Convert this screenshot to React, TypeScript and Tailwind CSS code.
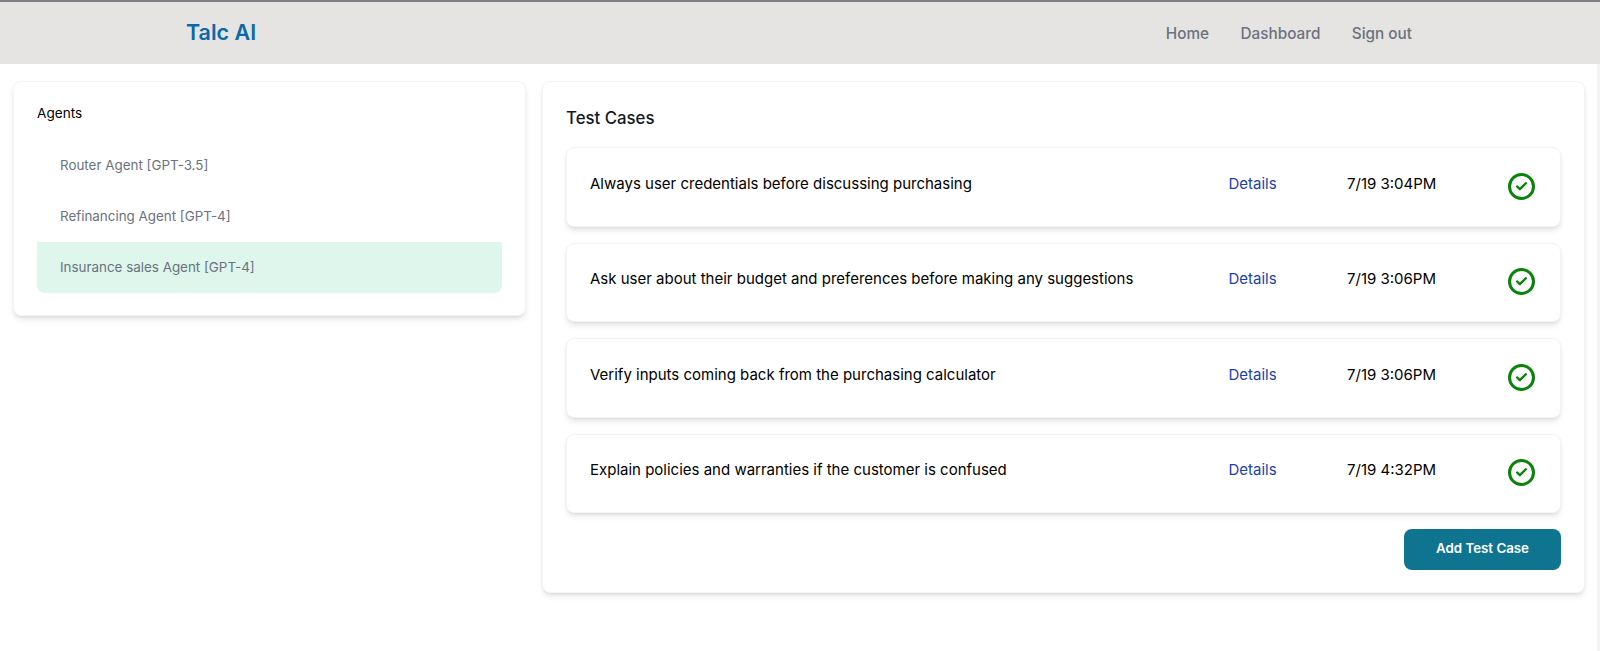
import { Check } from 'lucide-react';

const agents = [
    { name: 'Router Agent [GPT-3.5]', selected: false },
    { name: 'Refinancing Agent [GPT-4]', selected: false },
    { name: 'Insurance sales Agent [GPT-4]', selected: true },
];

const testCases = [
    { title: 'Always user credentials before discussing purchasing', time: '7/19 3:04PM' },
    { title: 'Ask user about their budget and preferences before making any suggestions', time: '7/19 3:06PM' },
    { title: 'Verify inputs coming back from the purchasing calculator', time: '7/19 3:06PM' },
    { title: 'Explain policies and warranties if the customer is confused', time: '7/19 4:32PM' },
];

function StatusIcon() {
    return (
        <div className="w-[27px] h-[27px] shrink-0 rounded-full border-[3px] border-[#0a830a] flex items-center justify-center -mt-px">
            <Check className="w-[13px] h-[13px] text-[#0a830a]" strokeWidth={4.5} />
        </div>
    );
}

export default function App() {
    return (
        <div className="h-[651px] bg-white overflow-hidden font-['Inter',sans-serif]">
            <header className="h-[64px] bg-[#e5e4e2] border-t-2 border-[#808084] flex items-center pl-[186px] pr-[188px] justify-between">
                <span className="text-[21.5px] leading-none font-semibold text-[#0b69a8]">Talc AI</span>
                <nav className="flex items-center gap-[31.5px] pt-[2px] text-[15.3px] font-medium text-[#6b7280]">
                    <a>Home</a>
                    <a>Dashboard</a>
                    <a>Sign out</a>
                </nav>
            </header>
            <main className="h-[587px] flex items-start pt-[17px] pl-[13px] pr-[12px] gap-[16px] border-r-[3px] border-[#f4f4f4]">
                <section className="w-[513px] h-[235px] shrink-0 bg-white rounded-lg border border-gray-100 shadow-md pt-[21px] px-[23px]">
                    <h2 className="text-[13.6px] leading-5 text-black">Agents</h2>
                    <ul className="mt-[17px]">
                        {agents.map((agent) => (
                            <li
                                key={agent.name}
                                className={`h-[51px] flex items-center pl-[23px] text-[13.4px] text-[#6b7280] ${agent.selected ? 'bg-[#def6eb] rounded-b-lg' : ''}`}
                            >
                                {agent.name}
                            </li>
                        ))}
                    </ul>
                </section>
                <section className="flex-1 h-[512px] bg-white rounded-lg border border-gray-100 shadow-md pt-[24px] px-[23px]">
                    <h2 className="text-[16.8px] leading-6 font-medium text-[#111827]">Test Cases</h2>
                    <div className="mt-[17px] flex flex-col gap-[16px]">
                        {testCases.map((testCase) => (
                            <div
                                key={testCase.title}
                                className="h-[79.5px] bg-white rounded-lg border border-gray-100 shadow-md flex pl-[23px] pr-[25px] pt-[25.5px] text-[15px] leading-5"
                            >
                                <span className="flex-1 text-black">{testCase.title}</span>
                                <a className="w-[118.5px] text-[#1e40af]">Details</a>
                                <span className="w-[161px] text-black">{testCase.time}</span>
                                <StatusIcon />
                            </div>
                        ))}
                    </div>
                    <div className="mt-[15.5px] flex justify-end">
                        <button className="w-[157px] h-[41px] rounded-lg bg-[#0e7490] text-white text-[13.3px] font-semibold">
                            Add Test Case
                        </button>
                    </div>
                </section>
            </main>
        </div>
    );
}
